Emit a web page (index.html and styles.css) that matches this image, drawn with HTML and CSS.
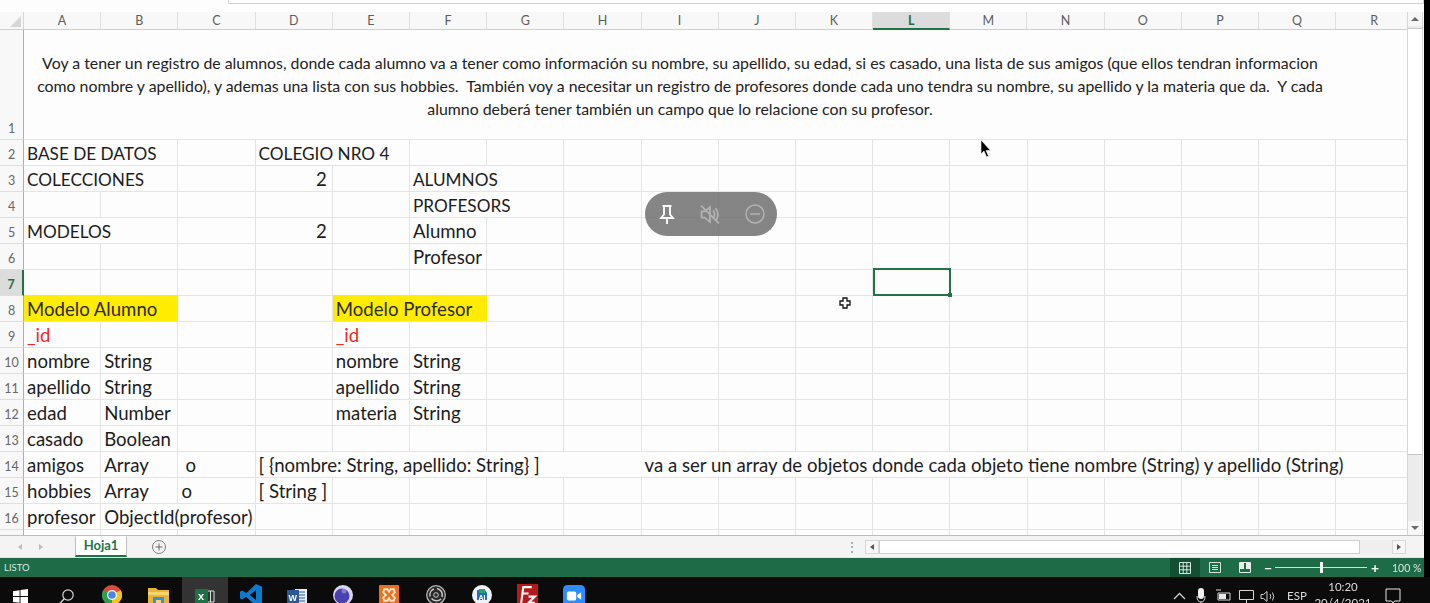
FILE: index.html
```html
<!DOCTYPE html>
<html lang="es">
<head>
<meta charset="utf-8">
<title>Hoja1 - Excel</title>
<link rel="stylesheet" href="styles.css">
</head>
<body>
<div class="window">
  <main class="app">
    <div class="topstrip"><div class="namebox"></div></div>
    <div class="body">
      <div class="sheetwrap">
        <div class="colhead">
          <div class="corner"><span class="tri"></span></div>
          <div class="ch">A</div><div class="ch">B</div><div class="ch">C</div><div class="ch">D</div><div class="ch">E</div><div class="ch">F</div><div class="ch">G</div><div class="ch">H</div><div class="ch">I</div><div class="ch">J</div><div class="ch">K</div><div class="ch sel">L</div><div class="ch">M</div><div class="ch">N</div><div class="ch">O</div><div class="ch">P</div><div class="ch">Q</div><div class="ch">R</div>
        </div>
        <div class="row r1">
          <div class="rh">1</div>
          <div class="cells">
            <div class="cell merged">Voy a tener un registro de alumnos, donde cada alumno va a tener como información su nombre, su apellido, su edad, si es casado, una lista de sus amigos (que ellos tendran informacion como nombre y apellido), y ademas una lista con sus hobbies.&nbsp; También voy a necesitar un registro de profesores donde cada uno tendra su nombre, su apellido y la materia que da.&nbsp; Y cada alumno deberá tener también un campo que lo relacione con su profesor.</div>
          </div>
        </div>
        <div class="row"><div class="rh">2</div><div class="cells">
          <div class="cell a s2 caps">BASE DE DATOS</div><div class="cell d s2 caps">COLEGIO NRO 4</div>
        </div></div>
        <div class="row"><div class="rh">3</div><div class="cells">
          <div class="cell a s2 caps">COLECCIONES</div><div class="cell d num">2</div><div class="cell f s2 caps">ALUMNOS</div>
        </div></div>
        <div class="row"><div class="rh">4</div><div class="cells">
          <div class="cell f s2 caps">PROFESORS</div>
        </div></div>
        <div class="row"><div class="rh">5</div><div class="cells">
          <div class="cell a s2 caps">MODELOS</div><div class="cell d num">2</div><div class="cell f">Alumno</div>
        </div></div>
        <div class="row"><div class="rh">6</div><div class="cells">
          <div class="cell f">Profesor</div>
        </div></div>
        <div class="row"><div class="rh on">7</div><div class="cells">
          <div class="cell l picked"><span class="handle"></span></div>
        </div></div>
        <div class="row"><div class="rh">8</div><div class="cells">
          <div class="cell a s2 yellow">Modelo Alumno</div><div class="cell e s2 yellow">Modelo Profesor</div>
        </div></div>
        <div class="row"><div class="rh">9</div><div class="cells">
          <div class="cell a red">_id</div><div class="cell e red">_id</div>
        </div></div>
        <div class="row"><div class="rh">10</div><div class="cells">
          <div class="cell a">nombre</div><div class="cell b">String</div><div class="cell e">nombre</div><div class="cell f">String</div>
        </div></div>
        <div class="row"><div class="rh">11</div><div class="cells">
          <div class="cell a">apellido</div><div class="cell b">String</div><div class="cell e">apellido</div><div class="cell f">String</div>
        </div></div>
        <div class="row"><div class="rh">12</div><div class="cells">
          <div class="cell a">edad</div><div class="cell b">Number</div><div class="cell e">materia</div><div class="cell f">String</div>
        </div></div>
        <div class="row"><div class="rh">13</div><div class="cells">
          <div class="cell a">casado</div><div class="cell b">Boolean</div>
        </div></div>
        <div class="row"><div class="rh">14</div><div class="cells">
          <div class="cell a">amigos</div><div class="cell b">Array</div><div class="cell c ind1">o</div><div class="cell d s4">[ {nombre: String, apellido: String} ]</div><div class="cell i s9">va a ser un array de objetos donde cada objeto tiene nombre (String) y apellido (String)</div>
        </div></div>
        <div class="row"><div class="rh">15</div><div class="cells">
          <div class="cell a">hobbies</div><div class="cell b">Array</div><div class="cell c">o</div><div class="cell d">[ String ]</div>
        </div></div>
        <div class="row"><div class="rh">16</div><div class="cells">
          <div class="cell a">profesor</div><div class="cell b s2">ObjectId(profesor)</div>
        </div></div>
        <div class="row clip"><div class="rh"></div><div class="cells"></div></div>
      </div>
      <div class="vscroll">
        <div class="sbtn"><span class="up"></span></div>
        <div class="vtrack"><div class="vthumb"></div></div>
        <div class="sbtn"><span class="down"></span></div>
      </div>
    </div>
    <div class="tabbar">
      <div class="tabnav"><span class="tl"></span><span class="tr"></span></div>
      <div class="tab">Hoja1</div>
      <svg class="addtab" width="16" height="16" viewBox="0 0 16 16"><circle cx="8" cy="8" r="6.5" fill="none" stroke="#7f7f7f"/><path d="M8 4.5v7M4.5 8h7" stroke="#6b6b6b" fill="none"/></svg>
      <div class="dots">⋮</div>
      <div class="hscroll">
        <div class="hbtn"><span class="tl dark"></span></div>
        <div class="hthumb"></div>
        <div class="hbtn"><span class="tr dark"></span></div>
      </div>
    </div>
    <div class="status">
      <div class="listo">LISTO</div>
      <div class="views">
        <div class="view on"><svg width="12" height="12" viewBox="0 0 12 12"><path d="M.5.5h11v11H.5zM.5 4.2h11M.5 7.8h11M4.2.5v11M7.8.5v11" fill="none" stroke="#d5e4dc"/></svg></div>
        <div class="view"><svg width="12" height="11" viewBox="0 0 12 11"><path d="M.5.5h11v10H.5zM3 3.5h6M3 5.500h6M3 7.500h6" fill="none" stroke="#d5e4dc"/></svg></div>
        <div class="view"><svg width="12" height="11" viewBox="0 0 12 11"><path d="M.5.5h11v10H.5z" fill="none" stroke="#e6efe9"/><path d="M1 1h4v6H1zM7 1h4v6H7z" fill="#e6efe9"/></svg></div>
      </div>
      <div class="zoom">
        <span class="zbtn">−</span>
        <div class="zline"><span class="zknob"></span></div>
        <span class="zbtn">+</span>
      </div>
      <div class="zpct">100 %</div>
    </div>
  </main>
  <footer class="taskbar">
    <div class="tb start"><svg width="15" height="15" viewBox="0 0 15 15"><path d="M0 2.200 6.600 1.200v5.900H0zM7.500 1.100 15 0v7.100H7.500zM0 8h6.600v5.800L0 12.900zM7.500 8H15v7l-7.500-1.100z" fill="#fff"/></svg></div>
    <div class="tb low"><svg width="18" height="18" viewBox="0 0 18 18"><circle cx="11" cy="7" r="5.200" fill="none" stroke="#d8d8d8" stroke-width="1.200"/><path d="M7.200 10.800 2 16.500" stroke="#d8d8d8" stroke-width="1.400"/></svg></div>
    <div class="tb"><svg width="20" height="20" viewBox="0 0 20 20"><circle cx="10" cy="10" r="10" fill="#dd4b39"/><path d="M10 10 1.300 5A10 10 0 0 0 10 20z" fill="#2f9e4f"/><path d="M10 10v10A10 10 0 0 0 18.700 5z" fill="#f5c518"/><circle cx="10" cy="10" r="5" fill="#fff"/><circle cx="10" cy="10" r="3.800" fill="#4a86e8"/></svg></div>
    <div class="tb low"><svg width="21" height="19" viewBox="0 0 21 19"><path d="M0 0h8l2 2h11v17H0z" fill="#e8b53a"/><path d="M0 4h21v3H0z" fill="#f6d56b"/><path d="M5 9h11v9H5z" fill="#3d8fd1"/><path d="M8 12h5v3H8z" fill="#f6d56b"/></svg></div>
    <div class="tb cur low"><svg width="20" height="16" viewBox="0 0 20 16"><path d="M0 1h13v14H0z" fill="#1e7145"/><path d="M13 3h6v11h-6" fill="none" stroke="#cfe6d8"/><path d="M15.500 3v11" stroke="#cfe6d8"/><text class="xl" x="3" y="12">x</text></svg></div>
    <div class="tb high"><svg width="22" height="22" viewBox="0 0 20 20"><path d="M14.500 0 20 2.500v15L14.500 20 5.500 11.500 2 14 0 13V7l2-1 3.500 2.500z" fill="#0b7bd0"/><path d="M14.500 5.500 9 10l5.500 4.500z" fill="#000"/></svg></div>
    <div class="tb low"><svg width="20" height="17" viewBox="0 0 20 17"><path d="M8 1h12v15H8z" fill="#e8edf6"/><path d="M11 4h7M11 7h7M11 10h7M11 13h7" stroke="#2b579a"/><path d="M0 2h12v14H0z" fill="#2b579a"/><text class="wd" x="1.500" y="12.500">W</text></svg></div>
    <div class="tb"><svg width="20" height="20" viewBox="0 0 20 20"><circle cx="10" cy="10" r="10" fill="#d9d6f2"/><circle cx="9" cy="11" r="7.500" fill="#4a3fb5"/><circle cx="11" cy="6" r="2.500" fill="#d9d6f2" opacity=".4"/></svg></div>
    <div class="tb"><svg width="20" height="20" viewBox="0 0 19 19"><rect width="19" height="19" rx="1" fill="#e8711f"/><path d="M5 4h3l1.500 2.500L11 4h3l1 3-2.500 2.500L15 12l-1 3h-3l-1.500-2.500L8 15H5l-1-3 2.500-2.500L4 7z" fill="none" stroke="#ffe3c7" stroke-width="1.800"/></svg></div>
    <div class="tb"><svg width="20" height="20" viewBox="0 0 20 20"><circle cx="10" cy="10" r="9.300" fill="#2a2a2a" stroke="#b5b5b5" stroke-width="1.300"/><circle cx="10" cy="10" r="2.300" fill="none" stroke="#c8c8c8"/><path d="M11 3.500A6.500 6.500 0 0 1 16 12M15 14a6.500 6.500 0 0 1-9.500-.500M4 11.500A6.500 6.500 0 0 1 8 4" fill="none" stroke="#c8c8c8" stroke-width="1.500"/></svg></div>
    <div class="tb"><svg width="20" height="20" viewBox="0 0 20 20"><circle cx="10" cy="10" r="10" fill="#eef2f5"/><path d="M5 5h8l2 3v7H5z" fill="#1d6fb8"/><path d="M7 4h6v4H7z" fill="#2f9e6f"/><text class="ai" x="6.500" y="14.500">AI</text></svg></div>
    <div class="tb high"><svg width="21" height="21" viewBox="0 0 20 20"><path d="M0 0h20v20H0z" fill="#b51a1a"/><path d="M4 18 6 3h8M5 9h6M11 12h6l-6 6h6" fill="none" stroke="#fff" stroke-width="2"/></svg></div>
    <div class="tb"><svg width="22" height="22" viewBox="0 0 20 20"><rect width="20" height="20" rx="4" fill="#2d8cff"/><rect x="3.500" y="6" width="8.500" height="8" rx="1.500" fill="#fff"/><path d="m13 9 3.500-2.500v7L13 11z" fill="#fff"/></svg></div>
    <div class="tray">
      <svg class="t-chev" width="13" height="8" viewBox="0 0 13 8"><path d="M1 7 6.500 1.500 12 7" fill="none" stroke="#cfcfcf" stroke-width="1.300"/></svg>
      <svg class="t-mic" width="10" height="18" viewBox="0 0 10 18"><rect x="2" y="0" width="6" height="11" rx="3" fill="#f0f0f0"/><path d="M1 8q0 6 4 6t4-6M5 14v4M2 17.500h6" fill="none" stroke="#e0e0e0"/></svg>
      <svg class="t-bat" width="16" height="12" viewBox="0 0 16 12"><path d="M2 4h12v7H2z" fill="none" stroke="#d8d8d8"/><path d="M3 5h7v5H3z" fill="#e8e8e8"/><path d="M0 1h5" stroke="#d8d8d8"/></svg>
      <svg class="t-net" width="17" height="16" viewBox="0 0 17 16"><path d="M1.500 1.500h14v9h-14zM8.500 10.500v3.500M5 14.500h7" fill="none" stroke="#d8d8d8"/></svg>
      <svg class="t-vol" width="16" height="13" viewBox="0 0 16 13"><path d="M1 4.500h2.500L7 1.500v10L3.500 8.500H1zM10 4q1.500 2.500 0 5M12.500 2.500q2.500 4 0 8" fill="none" stroke="#d0d0d0"/></svg>
      <span class="lang">ESP</span>
      <div class="clock"><span>10:20</span><span>20/4/2021</span></div>
      <svg class="notif" width="16" height="17" viewBox="0 0 16 17"><path d="M1 1h14v12H9.500L8 15l-1.500-2H1z" fill="none" stroke="#e6e6e6"/></svg>
    </div>
  </footer>
  <div class="pill">
    <svg width="16" height="19" viewBox="0 0 16 19"><path d="M3.500 1h9M5 1v8.500L2 13h12l-3-3.500V1M8 13v6" fill="none" stroke="#fff" stroke-width="1.800"/></svg>
    <svg width="22" height="21" viewBox="0 0 20 20"><path d="M2 7h3l5-4v14l-5-4H2zM13 6q2.500 4 0 8M15.500 4q4 6 0 12" fill="none" stroke="#b2b2b2" stroke-width="1.700"/><path d="M1.500 1.500l17 17" stroke="#b2b2b2" stroke-width="1.700"/></svg>
    <svg width="20" height="20" viewBox="0 0 20 20"><circle cx="10" cy="10" r="9" fill="none" stroke="#b2b2b2" stroke-width="1.500"/><path d="M5 10h10" stroke="#b2b2b2" stroke-width="1.500"/></svg>
  </div>
  <svg class="arrow" width="11" height="18" viewBox="0 0 11 18"><path d="M1 0v14l3-3 2.500 6 2-1-2.500-5.500h4.500z" fill="#000" stroke="#fff" stroke-width=".6"/></svg>
  <svg class="cross" width="12" height="12" viewBox="0 0 12 12"><path d="M4 1h4v3h3v4H8v3H4V8H1V4h3z" fill="#fff" stroke="#111" stroke-width="1.300"/></svg>
</div>
</body>
</html>
```
FILE: styles.css
```css
* { box-sizing: border-box; }
html, body { margin: 0; padding: 0; background: #000; }
body { width: 1430px; height: 603px; overflow: hidden; font-family: Lato, "Open Sans", sans-serif; }
.window { position: relative; width: 1430px; height: 603px; display: flex; flex-direction: column; overflow: hidden; filter: blur(.35px); }

.app { width: 1424px; height: 577px; background: #fdfdfd; display: flex; flex-direction: column; flex: none; }
.topstrip { height: 12px; padding-left: 228px; background: #fdfdfd; flex: none; }
.namebox { height: 4px; border: 1px solid #d2d2d2; border-top: 0; background: #fff; width: 1196px; }

.body { display: flex; height: 523px; flex: none; overflow: hidden; }
.sheetwrap { width: 1407px; overflow: hidden; flex: none; }
.colhead { display: flex; height: 18px; background: #f8f8f8; border-bottom: 1px solid #cfcfcf; }
.corner { width: 24px; flex: none; border-right: 1px solid #d4d4d4; display: flex; align-items: flex-end; justify-content: flex-end; padding: 0 2px 2px 0; }
.tri { width: 0; height: 0; border-left: 11px solid transparent; border-bottom: 11px solid #d6d6d6; }
.ch { width: 77.2px; flex: none; text-align: center; font-size: 12.5px; line-height: 18px; color: #5d5d5d; border-right: 1px solid #e0e0e0; }
.ch.sel { background: #dcdcdc; color: #1f6e46; font-weight: 700; border-bottom: 2px solid #217346; height: 18px; }

.row { display: flex; height: 26px; flex: none; }
.r1 { height: 110px; }
.clip { height: 10px; }
.rh { width: 24px; flex: none; background: #f8f8f8; border-right: 1px solid #aeaeae; border-bottom: 1px solid #dedede; font-size: 12.5px; line-height: 16px; color: #666; display: flex; align-items: flex-end; justify-content: center; padding-bottom: 2px; }
.rh.on { background: #dcdcdc; color: #1f6e46; font-weight: 700; border-right: 2px solid #217346; }
.cells { flex: 1; display: grid; grid-template-columns: repeat(18, 77.2px); grid-template-rows: 26px; border-bottom: 1px solid #e4e4e4; background: #fdfdfd repeating-linear-gradient(90deg, transparent 0, transparent 76.2px, #e4e4e4 76.2px, #e4e4e4 77.2px); min-width: 0; }
.r1 .cells { grid-template-rows: 110px; background: #fdfdfd; }
.cell { grid-row: 1; font-size: 18.6px; line-height: 26px; color: #1c1c1c; padding: 0 0 0 3px; white-space: nowrap; background: #fdfdfd; border-right: 1px solid #e4e4e4; height: 25px; position: relative; min-width: 0; }
.caps { font-size: 17.2px; line-height: 28px; }
.merged { grid-column: 1 / span 17; width: 1312px; height: 109px; white-space: normal; text-align: center; font-size: 15.85px; line-height: 23px; padding: 21px 4px 0; border: 0; color: #222; background: transparent; }
.a { grid-column: 1; } .b { grid-column: 2; } .c { grid-column: 3; } .d { grid-column: 4; } .e { grid-column: 5; } .f { grid-column: 6; } .i { grid-column: 9; } .l { grid-column: 12; }
.a.s2 { grid-column: 1 / span 2; } .b.s2 { grid-column: 2 / span 2; } .d.s2 { grid-column: 4 / span 2; } .e.s2 { grid-column: 5 / span 2; } .f.s2 { grid-column: 6 / span 2; }
.d.s4 { grid-column: 4 / span 5; border: 0; }
.i.s9 { grid-column: 9 / span 10; border: 0; padding-left: 3px; }
.num { text-align: right; padding: 0 5px 0 0; }
.ind1 { padding-left: 7px; }
.yellow { background: #ffec00; border-right: 0; color: #2a2a1a; height: 26px; margin-top: -1px; line-height: 28px; }
.red { color: #f0281e; }
.picked { border: 2px solid #217346; height: 28px; margin-top: -2px; width: 78px; background: transparent; padding: 0; z-index: 2; }
.handle { position: absolute; right: -3px; bottom: -3px; width: 4px; height: 4px; background: #217346; }

.vscroll { width: 16px; margin-right: 1px; flex: none; background: #ececec; border-left: 1px solid #d6d6d6; border-right: 1px solid #d6d6d6; display: flex; flex-direction: column; }
.sbtn { height: 14px; flex: none; display: flex; align-items: center; justify-content: center; background: #f7f7f7; }
.up { border: 4px solid transparent; border-bottom: 4px solid #6a6a6a; border-top: 0; width: 0; height: 0; }
.down { border: 4px solid transparent; border-top: 4px solid #6a6a6a; border-bottom: 0; width: 0; height: 0; }
.vtrack { flex: 1; padding-top: 2px; background: #ececec; }
.vthumb { height: 427px; background: #fff; border: 1px solid #c9c9c9; border-left: 0; border-right: 0; }

.tabbar { height: 22px; flex: none; display: flex; align-items: center; background: #f4f4f4; border-top: 1px solid #bdbdbd; }
.tabnav { width: 64px; flex: none; display: flex; gap: 17px; padding-left: 18px; align-items: center; }
.tl, .tr { display: block; width: 0; height: 0; border: 3px solid transparent; }
.tl { border-right: 4px solid #bdbdbd; border-left: 0; }
.tr { border-left: 4px solid #bdbdbd; border-right: 0; }
.tl.dark { border-right-color: #555; }
.tr.dark { border-left-color: #555; }
.tab { width: 52px; height: 21px; margin: -1px 0 0 11px; background: #fff; border: 1px solid #bdbdbd; border-top-color: #fff; border-bottom: 2px solid #217346; font-size: 13px; font-weight: 700; color: #217346; text-align: center; line-height: 17px; flex: none; }
.addtab { margin-left: 24px; flex: none; }
.dots { margin-left: 679px; width: 12px; color: #8a8a8a; font-size: 12px; text-align: center; flex: none; }
.hscroll { width: 541px; height: 14px; flex: none; display: flex; align-items: center; background: #efefef; margin-left: 7px; }
.hbtn { width: 14px; height: 14px; display: flex; align-items: center; justify-content: center; background: #f7f7f7; border: 1px solid #d8d8d8; flex: none; }
.hthumb { width: 481px; height: 14px; background: #fff; border: 1px solid #cfcfcf; flex: none; }
.hscroll .hbtn:last-child { margin-left: auto; }

.status { height: 20px; flex: none; background: #1e6b47; color: #d9e8df; display: flex; align-items: center; font-size: 9.5px; border-top: 1px solid #dfe9e3; }
.listo { padding-left: 4px; width: 1170px; flex: none; }
.views { display: flex; flex: none; }
.view { width: 30px; height: 19px; display: flex; align-items: center; justify-content: center; }
.view.on { background: #134f32; }
.zoom { display: flex; align-items: center; margin-left: 3px; flex: none; color: #fff; }
.zbtn { width: 10px; text-align: center; font-size: 14px; line-height: 14px; font-weight: 700; }
.zline { width: 92px; height: 1px; background: #cfe0d6; margin: 0 3px 0 2px; display: flex; justify-content: center; align-items: center; }
.zknob { width: 3px; height: 11px; background: #f2f2f2; flex: none; }
.zpct { margin-left: 12px; font-size: 10.5px; flex: none; color: #d9e8df; }

.taskbar { height: 26px; flex: none; background: #0b0b0b; display: flex; align-items: flex-start; overflow: hidden; }
.tb { width: 46.2px; height: 26px; flex: none; display: flex; justify-content: center; padding-top: 8px; }
.tb.start { width: 40px; margin-right: 3px; padding-top: 12px; }
.tb.low { padding-top: 11px; }
.tb.high { padding-top: 7px; }
.tb.cur { background: #333; }
.xl { font: 700 11px "Liberation Sans", sans-serif; fill: #fff; }
.wd { font: 700 9px "Liberation Sans", sans-serif; fill: #fff; }
.ai { font: 700 7px "Liberation Sans", sans-serif; fill: #fff; }
.tray { margin-left: auto; display: flex; height: 26px; padding-right: 29px; color: #dcdcdc; flex: none; align-items: flex-start; }
.t-chev { margin-top: 15px; }
.t-mic { margin: 11px 0 0 10px; }
.t-bat { margin: 12px 0 0 10px; }
.t-net { margin: 12px 0 0 6px; }
.t-vol { margin: 13px 0 0 5px; }
.lang { font-size: 11.5px; margin: 11px 0 0 11px; line-height: 16px; width: 18px; }
.clock { display: flex; flex-direction: column; align-items: center; font-size: 11.5px; line-height: 16px; margin: 2px 0 0 8px; width: 60px; flex: none; }
.notif { margin: 11px 0 0 12px; }

.pill { position: absolute; left: 645px; top: 192px; width: 132px; height: 44px; border-radius: 22px; background: rgba(112, 112, 112, .85); display: flex; align-items: center; justify-content: space-between; padding: 0 12px 0 14px; }
.arrow { position: absolute; left: 980px; top: 140px; }
.cross { position: absolute; left: 839px; top: 297px; }
```
